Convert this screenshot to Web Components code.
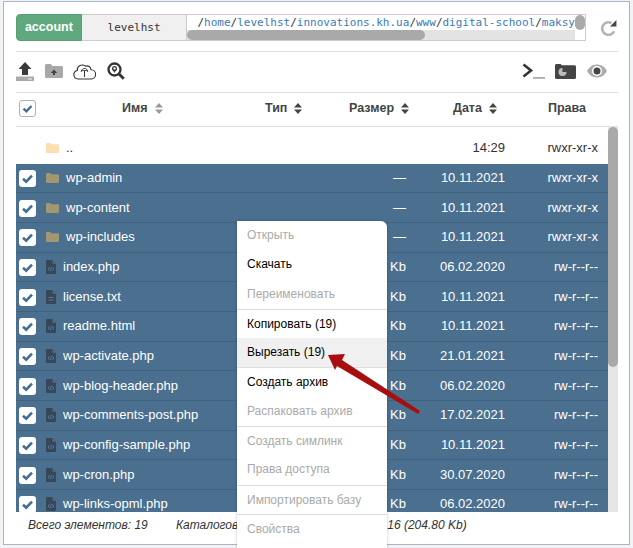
<!DOCTYPE html>
<html><head><meta charset="utf-8"><style>
html,body{margin:0;height:100%;overflow:hidden;background:#f1f3f7}
body{font-family:"Liberation Sans",Arial,sans-serif}
</style></head><body>
<fm-panel></fm-panel>
<script>
const FOLDER=c=>`<svg width="13" height="10" viewBox="0 0 13 10"><path d="M0 1.200C0 .5.500 0 1.200 0h3l1.300 1.300h6.300c.7 0 1.200.5 1.200 1.200v6.300c0 .7-.5 1.200-1.200 1.200H1.200C.5 10 0 9.500 0 8.800z" fill="${c}"/></svg>`;
const FILE=(k)=>`<svg width="10" height="14" viewBox="0 0 10 14"><path d="M0 1C0 .4.400 0 1 0h5.500L10 3.800V13c0 .6-.4 1-1 1H1c-.6 0-1-.4-1-1z" fill="#36475a"/><path d="M6.500 0v3.800H10z" fill="#5a6b7c"/>${k=='t'?'<path d="M2.500 7h5v1h-5zM2.500 9.500h5v1h-5z" fill="#5d7388"/>':'<path d="M3.500 7.200 2.100 9 3.500 10.800M6.500 7.200 7.900 9 6.500 10.800M5.500 7 4.500 11" stroke="#5d83a6" stroke-width=".8" fill="none"/>'}</svg>`;
const SORT=c=>`<svg width="8" height="11" viewBox="0 0 8 11" style="margin-left:7px"><path d="M4 0l4 4.400H0zM4 11L0 6.600h8z" fill="${c}"/></svg>`;

class FmCheck extends HTMLElement{
 constructor(){super();this.attachShadow({mode:'open'}).innerHTML=`<style>
 :host{display:block;width:17px;height:17px;box-sizing:border-box;background:#fff;border-radius:3px}
 :host([outline]){border:1px solid #aab4bf}
 svg{display:block;width:100%;height:100%}
 </style><svg viewBox="0 0 17 17"><path d="M4 8.700l3.200 3L13 5.600" fill="none" stroke="#426d94" stroke-width="2.600"/></svg>`;}
}
customElements.define('fm-check',FmCheck);

class FmRow extends HTMLElement{
 constructor(){super();const a=n=>this.getAttribute(n)||'';
 const kind=a('kind');
 const icon=kind=='dir'?FOLDER('#a1986f'):kind=='up'?FOLDER('#fcdfb0'):FILE(a('file'));
 const iconBox=kind=='dir'||kind=='up';
 this.attachShadow({mode:'open'}).innerHTML=`<style>
 :host{display:grid;grid-template-columns:30px 296px 64px 99px 93px;box-sizing:border-box;height:29.7px;align-items:center;background:#4a6f8f;color:#fff;border-bottom:1px solid #3f6280;font-size:13px}
 :host([kind=up]){height:36.5px;background:#fff;color:#333;border-bottom:0;padding-top:6px}
 .c{padding:1px 0 0 3px;display:flex}
 .n{display:flex;align-items:center;white-space:nowrap;padding-bottom:1px}
 .i{display:flex;width:${iconBox?20:17}px;flex:none;padding-top:1px}
 .s,.d,.p{text-align:right;white-space:nowrap;padding-bottom:1px}
 </style>
 <div class="c">${kind=='up'?'':'<fm-check></fm-check>'}</div>
 <div class="n"><span class="i">${icon}</span>${a('name')}</div>
 <div class="s">${a('size')}</div><div class="d">${a('date')}</div><div class="p">${a('perm')}</div>`;}
}
customElements.define('fm-row',FmRow);

class FmMenuItem extends HTMLElement{
 constructor(){super();this.attachShadow({mode:'open'}).innerHTML=`<style>
 :host{display:block;height:29.3px;line-height:29px;padding-left:10px;font-size:12px;color:#000;box-sizing:border-box}
 :host([off]){color:#aaa}
 :host([hi]){background:#f0f0f0}
 :host([sep]){border-top:1px solid #ddd}
 </style><slot></slot>`;}
}
customElements.define('fm-menu-item',FmMenuItem);

class FmMenu extends HTMLElement{
 constructor(){super();this.attachShadow({mode:'open'}).innerHTML=`<style>
 :host{display:block;position:absolute;left:233px;top:219px;width:150px;height:340px;background:#fff;border-radius:0 6px 0 0;box-shadow:0 0 3px rgba(0,0,0,.25)}
 </style><slot></slot>`;}
}
customElements.define('fm-menu',FmMenu);

class FmPanel extends HTMLElement{
 constructor(){super();
 const rows=[
 ['dir','wp-admin','—','10.11.2021','rwxr-xr-x'],
 ['dir','wp-content','—','10.11.2021','rwxr-xr-x'],
 ['dir','wp-includes','—','10.11.2021','rwxr-xr-x'],
 ['file','index.php','Kb','06.02.2020','rw-r--r--','c'],
 ['file','license.txt','Kb','10.11.2021','rw-r--r--','t'],
 ['file','readme.html','Kb','10.11.2021','rw-r--r--','c'],
 ['file','wp-activate.php','Kb','21.01.2021','rw-r--r--','c'],
 ['file','wp-blog-header.php','Kb','06.02.2020','rw-r--r--','c'],
 ['file','wp-comments-post.php','Kb','17.02.2021','rw-r--r--','c'],
 ['file','wp-config-sample.php','Kb','10.11.2021','rw-r--r--','c'],
 ['file','wp-cron.php','Kb','30.07.2020','rw-r--r--','c'],
 ['file','wp-links-opml.php','Kb','06.02.2020','rw-r--r--','c'],
 ].map(r=>`<fm-row kind="${r[0]}" name="${r[1]}" size="${r[2]}" date="${r[3]}" perm="${r[4]}" file="${r[5]||''}"></fm-row>`).join('');
 const path=['home','levelhst','innovations.kh.ua','www','digital-school','maksy'].map(s=>`<i>/</i>${s}`).join('');
 this.attachShadow({mode:'open'}).innerHTML=`<style>
 :host{display:block;box-sizing:border-box;position:absolute;left:3px;top:1px;width:627px;height:544px;background:#fff;border:1px solid #a9b5c3;padding:12px 12px 0;color:#333}
 .top{display:flex;height:27px;align-items:stretch}
 .acc{width:66px;box-sizing:border-box;background:#60a97e;border:1px solid #5b9c75;border-radius:4px 0 0 4px;color:#fff;font-weight:bold;font-size:12.5px;display:flex;align-items:center;justify-content:center;padding-bottom:1px}
 .usr{width:106px;box-sizing:border-box;background:#f0f0f0;border:1px solid #ccc;border-width:1px 1px 1px 0;font:11px "DejaVu Sans Mono",monospace;display:flex;align-items:center;justify-content:center}
 .path{width:400px;box-sizing:border-box;border:1px solid #ccc;border-left:0;display:grid;grid-template-columns:minmax(0,1fr) 10px;grid-template-rows:15px 10px}
 .txt{font:11px/15px "DejaVu Sans Mono",monospace;color:#3b7bb5;padding-left:10px;white-space:nowrap;overflow:hidden}
 .txt i{font-style:normal;color:#334}
 .vth{background:#aaa;border-radius:5px}
 .ht{background:#e3e3e3;grid-column:1}
 .hth{width:238px;height:100%;background:#a9a9a9;border-radius:5px}
 .ref{margin:6px 0 0 14px}
 .rule{height:1px;background:#dfdfdf;width:602px}
 .tools{height:40px;display:flex;align-items:center;width:602px;box-sizing:border-box;padding-bottom:2px}
 .tools svg{display:block}
 .head{display:grid;grid-template-columns:30px 219px 84px 89px 110px 70px;height:34px;width:602px;box-sizing:border-box;align-items:center;font-size:12.5px;font-weight:bold;color:#444;border-bottom:1px solid #dfdfdf;padding-bottom:3px}
 .head>div{display:flex;align-items:center}
 .scroll{display:grid;grid-template-columns:592px 10px;height:385px;width:602px;overflow:hidden}
 .list{overflow:hidden;min-width:0}
 .track{background:#e6e6e6}
 .thumb{height:240px;background:#a9a9a9;border-radius:5px}
 .foot{font-size:12px;font-style:italic;color:#333;display:flex;height:26px;align-items:center;padding-left:12px;white-space:nowrap}
 .arrow{position:absolute;left:0;top:0;pointer-events:none}
 </style>
 <div class="top">
  <div class="acc">account</div><div class="usr">levelhst</div>
  <div class="path"><div class="txt">${path}</div><div class="vth"></div><div class="ht"><div class="hth"></div></div></div>
  <svg class="ref" width="17" height="16" viewBox="0 0 17 16"><path d="M14.200 11.200A6.300 6.300 0 1 1 11.500 3" fill="none" stroke="#b5b5b5" stroke-width="2.600"/><path d="M16.500 0v6.500H10z" fill="#444"/></svg>
 </div>
 <div class="rule" style="margin-top:10px"></div>
 <div class="tools">
  <svg width="18" height="19" viewBox="0 0 18 19" style="margin-right:11px"><path d="M9 0l6.500 7H12v6H6V7H2.500z" fill="#3a3a3a"/><path d="M0 14.500h18V19H0z" fill="#aaa"/><path d="M12 16.500h4v1h-4z" fill="#eee"/></svg>
  <svg width="18" height="14" viewBox="0 0 18 14" style="margin-right:10px"><path d="M0 1.500C0 .7.700 0 1.500 0h4.200L7.500 2h9c.8 0 1.500.7 1.500 1.500v9c0 .8-.7 1.500-1.500 1.500h-15C.7 14 0 13.300 0 12.500z" fill="#a8a8a8"/><path d="M9 5.500l3.200 3.500H10v2H8V9H5.800z" fill="#444"/></svg>
  <svg width="23" height="17" viewBox="0 0 23 17" style="margin-right:11px"><path d="M6 16H5A4.300 4.300 0 0 1 4.300 7.500 5 5 0 0 1 12.500 3.200 4 4 0 0 1 18 6.800 4.600 4.600 0 0 1 18 16z" fill="none" stroke="#333" stroke-width="1.100"/><path d="M11.500 14V7.500M8.200 8.500c.5-2.200 2-3 3.300-3s2.800.8 3.300 3c-1-1-1.600-1-3.300-1s-2.300 0-3.300 1z" fill="none" stroke="#333" stroke-width="1"/></svg>
  <svg width="18" height="18" viewBox="0 0 18 18"><circle cx="7.500" cy="7.500" r="6" fill="none" stroke="#333" stroke-width="2.300"/><circle cx="7.500" cy="6.500" r="1.900" fill="none" stroke="#333" stroke-width="1.300"/><path d="M5.800 7.800 7.500 11l1.700-3.200" fill="#333"/><path d="M12 12l4.800 4.800" stroke="#333" stroke-width="2.800"/></svg>
  <svg width="24" height="16" viewBox="0 0 24 16" style="margin-left:auto;margin-right:9px"><path d="M1.500 1.500 9 7.500 1.500 13.500" fill="none" stroke="#333" stroke-width="2.600"/><path d="M11 14h12v1.800H11z" fill="#aaa"/></svg>
  <svg width="21" height="15" viewBox="0 0 21 15" style="margin-right:11px"><path d="M0 1.500C0 .7.700 0 1.500 0h4l1.500 1.200h12.500c.8 0 1.500.7 1.500 1.500v10.800c0 .8-.7 1.500-1.500 1.500h-18C.7 15 0 14.300 0 13.500z" fill="#444"/><circle cx="7.500" cy="8" r="4" fill="#bbb"/><path d="M7.500 8V3.500a4.500 4.500 0 0 1 4.500 4.500z" fill="#444"/></svg>
  <svg width="20" height="14" viewBox="0 0 20 14" style="margin-right:11px"><path d="M0 7C2.500 2.500 6 .5 10 .5S17.500 2.500 20 7c-2.500 4.500-6 6.500-10 6.500S2.500 11.500 0 7z" fill="#ababab"/><circle cx="10" cy="7" r="5" fill="#fff"/><circle cx="10" cy="7" r="3.500" fill="#444"/></svg>
 </div>
 <div class="rule"></div>
 <div class="head">
  <div style="padding-left:3px"><fm-check outline></fm-check></div>
  <div style="padding-left:76px">Имя${SORT('#999')}</div>
  <div>Тип${SORT('#444')}</div>
  <div>Размер${SORT('#444')}</div>
  <div style="padding-left:15px">Дата${SORT('#444')}</div>
  <div>Права</div>
 </div>
 <div class="scroll"><div class="list">
  <fm-row kind="up" name=".." date="14:29" perm="rwxr-xr-x"></fm-row>
  ${rows}
 </div><div class="track"><div class="thumb"></div></div></div>
 <div class="foot"><span style="width:148px">Всего элементов: 19</span><span style="width:162px">Каталогов: 3</span><span>Файлов: 16 (204.80 Kb)</span></div>
 <slot></slot>
 <svg class="arrow" width="627" height="544" viewBox="0 0 627 544"><path d="M324 353 341 352 338 358 416 409 414 412 333 364 331 368z" fill="#a80d0f"/></svg>`;
 this.innerHTML=`<fm-menu>
 <fm-menu-item off>Открыть</fm-menu-item><fm-menu-item>Скачать</fm-menu-item><fm-menu-item off>Переименовать</fm-menu-item>
 <fm-menu-item sep>Копировать (19)</fm-menu-item><fm-menu-item hi>Вырезать (19)</fm-menu-item><fm-menu-item sep>Создать архив</fm-menu-item>
 <fm-menu-item off>Распаковать архив</fm-menu-item><fm-menu-item off sep>Создать симлинк</fm-menu-item><fm-menu-item off>Права доступа</fm-menu-item>
 <fm-menu-item off sep>Импортировать базу</fm-menu-item><fm-menu-item off sep>Свойства</fm-menu-item></fm-menu>`;
 }
}
customElements.define('fm-panel',FmPanel);
</script>
</body></html>
